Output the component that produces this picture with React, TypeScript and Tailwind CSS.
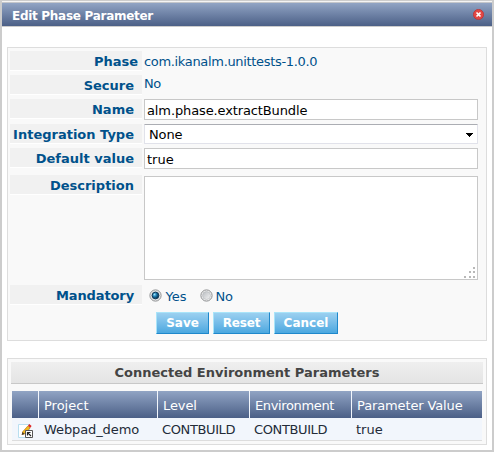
import type { ReactNode } from 'react';

const blueBar = 'bg-linear-to-b from-[#91a4c4] to-[#4c6087]';
const field = 'w-[334px] border border-[#c8c8c8] bg-white text-black';

const columns = [
  { title: '', tracking: '' },
  { title: 'Project', tracking: '' },
  { title: 'Level', tracking: 'tracking-[-0.1px]' },
  { title: 'Environment', tracking: 'tracking-[-0.36px]' },
  { title: 'Parameter Value', tracking: 'tracking-[-0.13px]' },
];

function Row({ label, className, pad = 'pr-2', tracking = '', children }: {
  label: string;
  className: string;
  pad?: string;
  tracking?: string;
  children: ReactNode;
}) {
  return (
    <div className={`flex items-start gap-0.5 ${className}`}>
      <div className={`h-5 w-[132px] shrink-0 whitespace-nowrap border-b border-white bg-[#f1f1f1] text-right font-bold leading-[21px] ${pad} ${tracking}`}>
        {label}
      </div>
      {children}
    </div>
  );
}

function Radio({ checked }: { checked?: boolean }) {
  return (
    <svg width="13" height="13" viewBox="0 0 13 13" className="mt-px shrink-0">
      <defs>
        <radialGradient id="dot" cx=".35" cy=".35" r=".65">
          <stop offset="0" stopColor="#9de4fb" />
          <stop offset=".45" stopColor="#2080b5" />
          <stop offset="1" stopColor="#06304f" />
        </radialGradient>
        <linearGradient id="well" x1="0" y1="0" x2="1" y2="1">
          <stop offset="0" stopColor="#b8bcc0" />
          <stop offset="1" stopColor="#f4f4f4" />
        </linearGradient>
      </defs>
      <circle cx="6.5" cy="6.5" r="5.6" fill="#f5f5f5" stroke="#8a8c8e" />
      <circle cx="6.5" cy="6.5" r="4" fill="url(#well)" stroke="#b9bcbf" strokeWidth=".7" />
      {checked && <circle cx="6.5" cy="6.5" r="3.3" fill="url(#dot)" stroke="#103c5c" />}
    </svg>
  );
}

function Button({ className, children }: { className: string; children: ReactNode }) {
  return (
    <button className={`h-[22px] whitespace-nowrap border border-t-[#a9e4f9] border-r-[#1f88cb] border-b-[#1f88cb] border-l-[#a9e4f9] bg-linear-to-b from-[#9bd0f0] to-[#4aa8e0] text-center text-[12px] font-bold leading-5 text-white ${className}`}>
      {children}
    </button>
  );
}

function EditIcon() {
  return (
    <svg width="16" height="16" viewBox="0 0 16 16">
      <path d="M.5 1.5h11v13H.5z" fill="#fff" stroke="#b9dff0" />
      <path d="M4.6 8.8 10 2.8l2.2 2-5.4 6-2.4.8z" fill="#f5b61c" stroke="#a8731a" strokeWidth=".6" />
      <path d="m4.5 9-.9 2.9 3-.9z" fill="#4b3b27" />
      <path d="m10 2.6 1.3-1.5 2.3 2-1.4 1.6z" fill="#df2424" />
      <path d="M7.5 7.5h7v7h-7z" fill="#fff" stroke="#555" />
      <path d="M9.5 12.5v-3h3M9.8 9.8l3.2 3.2" fill="none" stroke="#222" strokeWidth="1.2" />
    </svg>
  );
}

export default function App() {
  return (
    <div className="flex h-[452px] w-[494px] flex-col overflow-hidden border-2 border-t border-[#ccc] bg-white font-['DejaVu_Sans',sans-serif] text-[13px] text-[#00518b]">
      <div className="h-0.5 shrink-0 border-b border-[#c4c6ca] bg-[#f4f4f4]" />
      <header className={`flex h-6 shrink-0 items-center justify-between border-b border-[#ccc] pr-2 pl-2.5 ${blueBar}`}>
        <h1 className="mt-[3px] whitespace-nowrap text-[12px] font-bold leading-4 tracking-[-0.29px] text-white">Edit Phase Parameter</h1>
        <svg width="11" height="11" viewBox="0 0 11 11">
          <circle cx="5.5" cy="5.5" r="5.1" fill="#e34643" stroke="#bd3436" strokeWidth=".8" />
          <path d="m3.5 3.5 4 4m0-4-4 4" stroke="#fff" strokeWidth="1.7" />
        </svg>
      </header>

      <section className="mx-[5px] mt-5 flex h-[294px] shrink-0 flex-col border border-[#ddd] bg-[#f9f9f9] pt-[3px] pl-0.5">
        <Row label="Phase" className="h-6" pad="pr-1">
          <span className="whitespace-nowrap leading-[21px] tracking-[-0.33px]">com.ikanalm.unittests-1.0.0</span>
        </Row>
        <Row label="Secure" className="h-6">
          <span className="leading-[17px] tracking-[-0.5px]">No</span>
        </Row>
        <Row label="Name" className="h-[25px]">
          <div className={`h-[21px] pl-0.5 leading-[21px] tracking-[-0.12px] ${field}`}>alm.phase.extractBundle</div>
        </Row>
        <Row label="Integration Type" className="h-6">
          <div className="flex h-5 w-[334px] items-center justify-between rounded-[1px] border border-[#e1e2ea] border-t-[#abadb3] bg-white pr-1 pl-1 text-black">
            <span className="pt-0.5 leading-5 tracking-[-0.15px]">None</span>
            <svg width="7" height="4" viewBox="0 0 7 4" shapeRendering="crispEdges" className="mt-0.5">
              <path d="M0 0h7v1H6v1H5v1H4v1H3V3H2V2H1V1H0z" />
            </svg>
          </div>
        </Row>
        <Row label="Default value" className="h-[27px]">
          <div className={`h-[21px] pl-0.5 leading-[21px] ${field}`}>true</div>
        </Row>
        <Row label="Description" className="h-[110px]">
          <div className={`mt-px flex h-[104px] items-end justify-end pr-px ${field}`}>
            <svg width="12" height="13" viewBox="0 0 12 13" fill="#b8b8b8" shapeRendering="crispEdges">
              <path d="M9 1h2v2H9zM5 5h2v2H5zM9 5h2v2H9zM0 10h2v2H0zM5 10h2v2H5zM9 10h2v2H9z" />
            </svg>
          </div>
        </Row>
        <Row label="Mandatory" className="h-[27px]" tracking="tracking-[-0.12px]">
          <div className="flex items-start pt-[3px] pl-[4.5px] leading-[17px]">
            <Radio checked />
            <span className="ml-1 w-[34px]">Yes</span>
            <Radio />
            <span className="ml-[3px] tracking-[-0.2px]">No</span>
          </div>
        </Row>
        <div className="flex gap-1 pl-[146px]">
          <Button className="w-[53px]">Save</Button>
          <Button className="w-[57px] tracking-[-0.15px]">Reset</Button>
          <Button className="w-16">Cancel</Button>
        </div>
      </section>

      <section className="mx-[5px] mt-[17px] h-[87px] shrink-0 border border-[#ddd] bg-[#f9f9f9] p-[3px]">
        <h2 className="h-[22px] whitespace-nowrap border-b border-[#c8c8c8] bg-linear-to-b from-[#efefef] to-[#e4e4e4] text-center text-[13px] font-bold leading-[22px] text-[#444]">
          Connected Environment Parameters
        </h2>
        <div className="mx-px mt-[7px] grid grid-cols-[26px_118px_91px_101px_130px] gap-x-px border-b border-[#ddd] bg-[#f2f6fc] leading-6 text-[#222b38]">
          {columns.map(({ title, tracking }) => (
            <div key={title} className={`h-[27px] whitespace-nowrap pl-[5px] leading-[29px] text-white ${tracking} ${blueBar}`}>{title}</div>
          ))}
          <div className="h-[22px] pt-[5px] pl-1.5"><EditIcon /></div>
          <div className="h-[22px] pl-[5px] tracking-[-0.1px]">Webpad_demo</div>
          <div className="h-[22px] pl-1 tracking-[-0.38px]">CONTBUILD</div>
          <div className="h-[22px] pl-1 tracking-[-0.38px]">CONTBUILD</div>
          <div className="h-[22px] pl-1">true</div>
        </div>
      </section>
    </div>
  );
}
